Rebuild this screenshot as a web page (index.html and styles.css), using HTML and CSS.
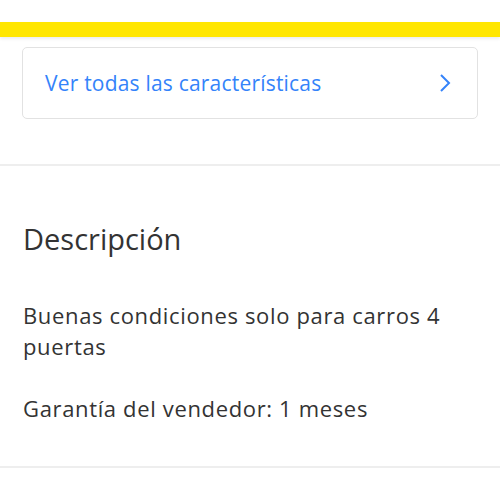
FILE: index.html
```html
<!DOCTYPE html>
<html lang="es">
<head>
    <meta charset="UTF-8">
    <meta name="viewport" content="width=device-width, initial-scale=1.0">
    <title>Descripción</title>
    <link rel="stylesheet" href="styles.css">
</head>
<body>
    <div class="top-space"></div>
    <div class="brand-bar"></div>

    <section class="specs">
        <a class="specs-link" href="#">
            <span>Ver todas las características</span>
            <svg class="chevron" width="12" height="20" viewBox="0 0 12 20">
                <path d="M2 2 L10 10 L2 18" fill="none" stroke="#3483fa" stroke-width="2"/>
            </svg>
        </a>
    </section>

    <section class="description">
        <h2>Descripción</h2>
        <p>Buenas condiciones solo para carros 4 puertas<br><br>Garantía del vendedor: 1 meses</p>
    </section>
</body>
</html>
```

FILE: styles.css
```css
* {
    box-sizing: border-box;
    margin: 0;
    padding: 0;
}

body {
    background: #ffffff;
    font-family: "Open Sans", "Noto Sans", sans-serif;
    color: #333333;
    overflow: hidden;
}

.top-space {
    height: 22px;
}

.brand-bar {
    height: 15px;
    background: #ffe600;
    box-shadow: 0 2px 3px rgba(0, 0, 0, 0.08);
}

.specs {
    padding: 10px 22px 45px 22px;
    border-bottom: 2px solid #eeeeee;
}

.specs-link {
    display: flex;
    align-items: center;
    justify-content: space-between;
    height: 72px;
    padding: 0 26px 0 22px;
    border: 1px solid #e2e2e2;
    border-radius: 5px;
    color: #3483fa;
    font-size: 21px;
    letter-spacing: 0.2px;
    text-decoration: none;
}

.description {
    padding: 55px 23px 42px 23px;
    border-bottom: 2px solid #eeeeee;
}

.description h2 {
    font-size: 29px;
    font-weight: 400;
    line-height: 36px;
    margin-bottom: 43px;
}

.description p {
    font-size: 22px;
    line-height: 31px;
    letter-spacing: 0.65px;
}
```
